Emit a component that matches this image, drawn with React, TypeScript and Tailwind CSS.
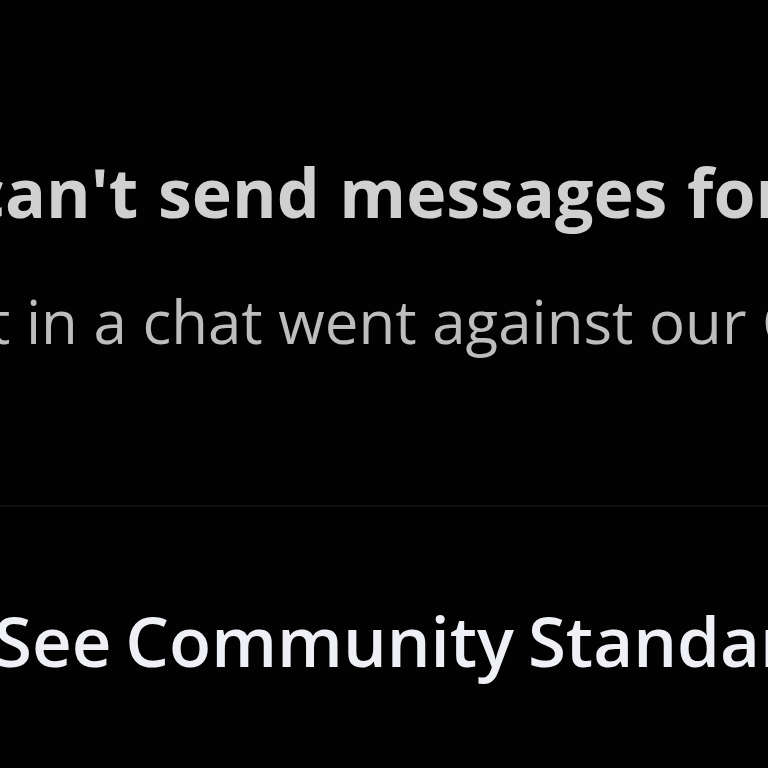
import React from "react";

const App: React.FC = () => {
  return (
    <div
      className="w-[768px] h-[768px] overflow-hidden bg-[#020202] flex flex-col"
      style={{ fontFamily: '"Open Sans", "Noto Sans", sans-serif' }}
    >
      {/* Title */}
      <div className="pt-[158px] whitespace-nowrap">
        <h1 className="ml-[-30px] text-[68px] leading-none font-bold text-[#d0d0d0] [word-spacing:2px]">
          can't send messages for
        </h1>
      </div>

      {/* Reason */}
      <p className="mt-[65px] ml-[-11px] whitespace-nowrap text-[60px] leading-none text-[#bdbdbd]">
        t in a chat went against our C
      </p>

      {/* Divider */}
      <div className="mt-[154px] h-[2px] w-full bg-[#0f0f0f]" />

      {/* Link */}
      <a className="mt-[99px] ml-[-6px] whitespace-nowrap text-[69px] leading-none font-semibold text-[#eef0f5] [word-spacing:-4px]">
        See Community Standar
      </a>
    </div>
  );
};

export default App;
